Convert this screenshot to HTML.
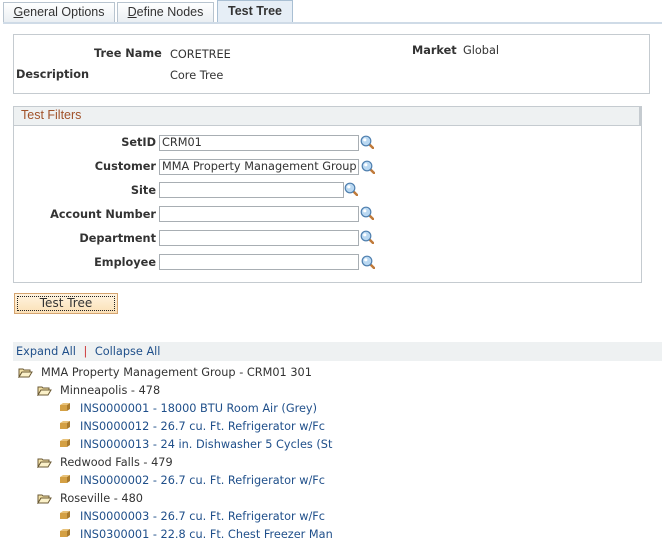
<!DOCTYPE html>
<html><head><style>
*{margin:0;padding:0;box-sizing:border-box}
body{width:662px;height:546px;background:#fff;position:relative;overflow:hidden;font-family:"DejaVu Sans",sans-serif;font-size:11.3px;color:#333}
.a{position:absolute;white-space:nowrap}
.tab{position:absolute;border:1px solid #b8c4cf;border-bottom:none;background:linear-gradient(#fff,#e9eef2);font-family:"Liberation Sans",sans-serif;font-size:12.5px;color:#333;text-align:center}
.b{font-weight:bold}
.lbl{position:absolute;right:506px;font-weight:bold;white-space:nowrap}
.in{position:absolute;left:159px;height:16px;border:1px solid #a8aeb3;background:#fff;padding-left:2px;line-height:14px;white-space:nowrap;overflow:hidden;color:#333}
.lk{color:#1f4f8a}
.mag{position:absolute;width:14px;height:14px}
.fold{position:absolute;width:15px;height:11px}
.box{position:absolute;width:12px;height:10px}
</style></head><body>
<div class="tab" style="left:3px;top:2px;width:112px;height:21px;line-height:19px"><u>G</u>eneral Options</div>
<div class="tab" style="left:117px;top:2px;width:97px;height:21px;line-height:19px"><u>D</u>efine Nodes</div>
<div class="tab b" style="left:217px;top:0;width:76px;height:23px;line-height:21px;background:#e6eef6;border-color:#a9bfd3">Test Tree</div>
<div class="a" style="left:3px;top:22px;width:659px;height:2px;background:#cfdbe7"></div>

<div class="a" style="left:13px;top:34px;width:637px;height:60px;border:1px solid #c5cbd0"></div>
<div class="a b" style="left:94px;top:47px">Tree Name</div>
<div class="a" style="left:170px;top:48px">CORETREE</div>
<div class="a b" style="left:16px;top:68px">Description</div>
<div class="a" style="left:170px;top:69px">Core Tree</div>
<div class="a b" style="left:412px;top:44px">Market</div>
<div class="a" style="left:463px;top:44px">Global</div>

<div class="a" style="left:13px;top:106px;width:629px;height:177px;border:1px solid #c5cbd0"></div>
<div class="a" style="left:14px;top:107px;width:627px;height:19px;background:#eef1f2;border-bottom:1px solid #c5cbd0;border-right:2px solid #c5cbd0"></div>
<div class="a" style="left:21px;top:108px;color:#a1522a;font-size:12.5px;font-family:'Liberation Sans',sans-serif">Test Filters</div>

<div class="lbl" style="top:136px">SetID</div><div class="in" style="top:135px;width:200px">CRM01</div>
<div class="lbl" style="top:160px">Customer</div><div class="in" style="top:159px;width:200px">MMA Property Management Group</div>
<div class="lbl" style="top:184px">Site</div><div class="in" style="top:182px;width:185px"></div>
<div class="lbl" style="top:208px">Account Number</div><div class="in" style="top:206px;width:200px"></div>
<div class="lbl" style="top:232px">Department</div><div class="in" style="top:230px;width:200px"></div>
<div class="lbl" style="top:256px">Employee</div><div class="in" style="top:254px;width:200px"></div>

<svg width="0" height="0" style="position:absolute"><defs><g id="m"><line x1="8" y1="8" x2="13" y2="13" stroke="#c07a3a" stroke-width="2.5" stroke-linecap="round"/><circle cx="6" cy="6" r="4.8" fill="#b9d8f2" stroke="#4f7fae" stroke-width="1.2"/><circle cx="4.8" cy="4.8" r="1.6" fill="#fff"/></g>
<g id="f"><path d="M1 2h4l1 1h6v2H4L1 10z" fill="#f4e3a8" stroke="#6b5a35"/><path d="M1 10L4 5h10l-3 5z" fill="#fbf1c9" stroke="#6b5a35"/></g>
<g id="x"><path d="M1 3l3-2h7l-3 2z" fill="#e8c27a"/><rect x="1" y="3" width="7" height="6" fill="#d4a044"/><path d="M8 3l3-2v6l-3 2z" fill="#a97a2c"/></g></defs></svg>
<svg class="mag" style="left:360px;top:135px"><use href="#m"/></svg>
<svg class="mag" style="left:361px;top:160px"><use href="#m"/></svg>
<svg class="mag" style="left:344px;top:182px"><use href="#m"/></svg>
<svg class="mag" style="left:360px;top:206px"><use href="#m"/></svg>
<svg class="mag" style="left:360px;top:230px"><use href="#m"/></svg>
<svg class="mag" style="left:361px;top:255px"><use href="#m"/></svg>

<div class="a" style="left:14px;top:293px;width:104px;height:21px;border:1px solid #d4a470;background:linear-gradient(#fff4e0,#fbe0b6)"><div style="margin:2px;border:1px dotted #222;height:15px;line-height:13px;text-align:center;font-size:12px">Test Tree</div></div>

<div class="a" style="left:13px;top:342px;width:649px;height:19px;background:#eef1f2"></div>
<div class="a" style="left:16px;top:345px"><span class="lk">Expand All</span> <span style="color:#c33;margin:0 4px">|</span> <span class="lk">Collapse All</span></div>

<svg class="fold" style="left:18px;top:367px"><use href="#f"/></svg>
<div class="a" style="left:41px;top:366px">MMA Property Management Group - CRM01 301</div>
<svg class="fold" style="left:37px;top:385px"><use href="#f"/></svg>
<div class="a" style="left:60px;top:384px">Minneapolis - 478</div>
<svg class="box" style="left:59px;top:402px"><use href="#x"/></svg>
<div class="a lk" style="left:80px;top:402px">INS0000001 - 18000 BTU Room Air (Grey)</div>
<svg class="box" style="left:59px;top:420px"><use href="#x"/></svg>
<div class="a lk" style="left:80px;top:420px">INS0000012 - 26.7 cu. Ft. Refrigerator w/Fc</div>
<svg class="box" style="left:59px;top:438px"><use href="#x"/></svg>
<div class="a lk" style="left:80px;top:438px">INS0000013 - 24 in. Dishwasher 5 Cycles (St</div>
<svg class="fold" style="left:37px;top:457px"><use href="#f"/></svg>
<div class="a" style="left:60px;top:456px">Redwood Falls - 479</div>
<svg class="box" style="left:59px;top:474px"><use href="#x"/></svg>
<div class="a lk" style="left:80px;top:474px">INS0000002 - 26.7 cu. Ft. Refrigerator w/Fc</div>
<svg class="fold" style="left:37px;top:493px"><use href="#f"/></svg>
<div class="a" style="left:60px;top:492px">Roseville - 480</div>
<svg class="box" style="left:59px;top:510px"><use href="#x"/></svg>
<div class="a lk" style="left:80px;top:510px">INS0000003 - 26.7 cu. Ft. Refrigerator w/Fc</div>
<svg class="box" style="left:59px;top:528px"><use href="#x"/></svg>
<div class="a lk" style="left:80px;top:528px">INS0300001 - 22.8 cu. Ft. Chest Freezer Man</div>
</body></html>
